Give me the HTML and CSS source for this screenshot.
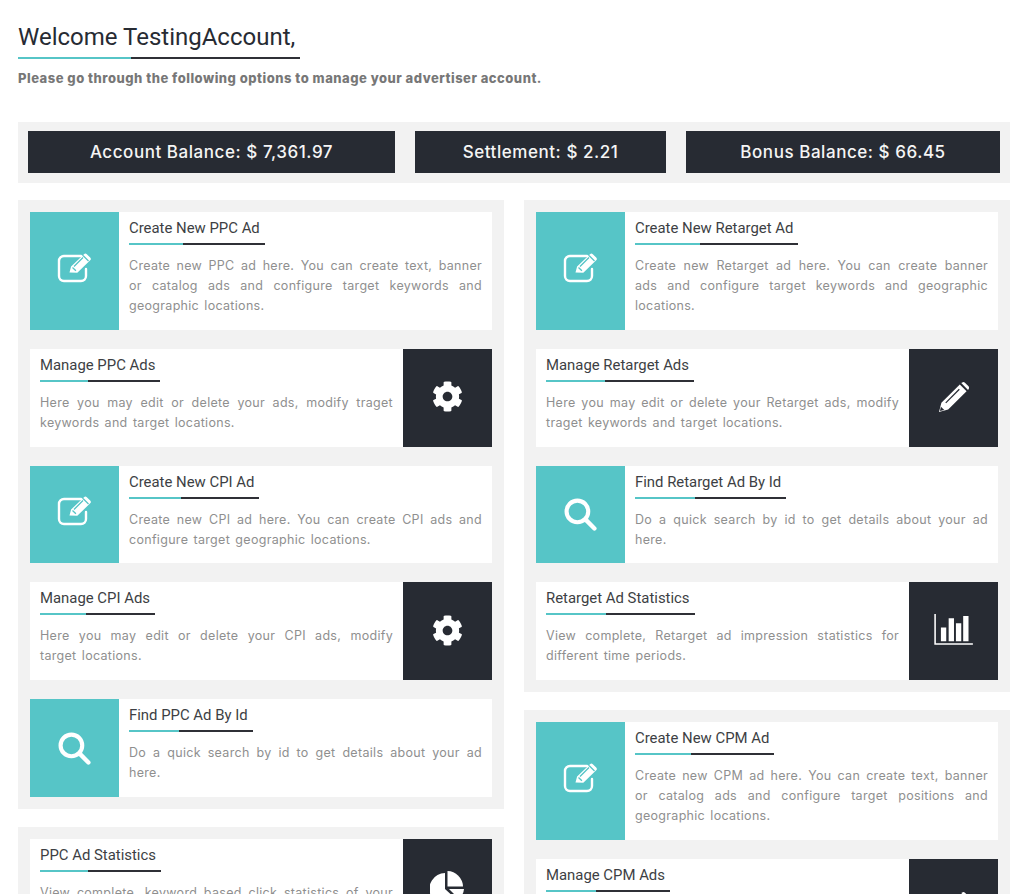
FILE: index.html
```html
<!DOCTYPE html>
<html lang="en">
<head>
  <meta charset="UTF-8" />
  <title>Advertiser Dashboard</title>
  <link rel="stylesheet" href="styles.css">
</head>
<body>
  <svg class="sprite" width="0" height="0">
    <symbol id="i-edit" viewBox="0 0 36 30">
      <path d="M24 3H7a5 5 0 0 0-5 5v15a5 5 0 0 0 5 5h17a5 5 0 0 0 5-5v-7" fill="none" stroke="#fff" stroke-width="2.4" stroke-linecap="round"/>
      <path d="M12.5 19.5l1.6-6L27 1.2a2 2 0 0 1 2.8 0l3.4 3.3a2 2 0 0 1 0 2.8L20.300 19.800z" fill="#fff"/>
      <path d="M15.500 14.500l3.400 3.300M17 13.500l9-9" stroke="#56c5c7" stroke-width="1.300" fill="none"/>
      <path d="M26 2.500l5.500 5.500" stroke="#56c5c7" stroke-width="1.300" fill="none"/>
    </symbol>
    <symbol id="i-gear" viewBox="0 0 512 512">
      <path fill="#fff" d="M487.4 315.7l-42.6-24.6c4.3-23.2 4.3-47 0-70.2l42.6-24.6c4.9-2.800 7.100-8.600 5.500-14-11.100-35.600-30-67.800-54.700-94.600-3.800-4.100-10-5.100-14.800-2.300L380.800 110c-17.900-15.400-38.500-27.300-60.800-35.100V25.800c0-5.600-3.900-10.500-9.400-11.700-36.700-8.200-74.300-7.800-109.200 0-5.500 1.200-9.400 6.100-9.400 11.700V75c-22.200 7.900-42.800 19.800-60.800 35.100L88.700 85.500c-4.900-2.800-11-1.900-14.800 2.300-24.700 26.700-43.600 58.900-54.700 94.600-1.700 5.400.6 11.200 5.500 14L67.300 221c-4.300 23.200-4.300 47 0 70.200l-42.600 24.600c-4.900 2.800-7.100 8.600-5.500 14 11.100 35.600 30 67.800 54.700 94.600 3.800 4.100 10 5.100 14.800 2.300l42.600-24.600c17.900 15.400 38.500 27.300 60.800 35.100v49.200c0 5.600 3.900 10.500 9.400 11.700 36.700 8.200 74.300 7.800 109.200 0 5.500-1.200 9.400-6.100 9.400-11.700v-49.200c22.200-7.900 42.800-19.800 60.800-35.100l42.600 24.600c4.900 2.800 11 1.900 14.800-2.300 24.700-26.700 43.600-58.900 54.700-94.600 1.500-5.500-.7-11.300-5.600-14.100zM256 336c-44.100 0-80-35.900-80-80s35.900-80 80-80 80 35.900 80 80-35.900 80-80 80z"/>
    </symbol>
    <symbol id="i-pencil" viewBox="0 0 32 32">
      <path fill="#fff" d="M1 31l2.500-9.500L22.500 2.500 29.500 9.500 10.500 28.500zM24 1l1-.6a2.500 2.500 0 0 1 2.500 0l4 4a2.500 2.500 0 0 1 0 3L31 8.200z"/>
      <path d="M8 21.500L22 7.500" stroke="#272b33" stroke-width="1.300"/>
      <path d="M3 25.500l3.500 3.500L2 30z" fill="#272b33"/>
    </symbol>
    <symbol id="i-search" viewBox="0 0 32 32">
      <circle cx="13" cy="13" r="10.500" fill="none" stroke="#fff" stroke-width="4"/>
      <path d="M21 21l8.500 8.500" stroke="#fff" stroke-width="4.200" stroke-linecap="round"/>
    </symbol>
    <symbol id="i-chart" viewBox="0 0 40 32">
      <path d="M1 0v31h39" fill="none" stroke="#fff" stroke-width="1.600"/>
      <path fill="#fff" d="M7 14h5.500v14H7zM15 4.500h5.500V28H15zM22.500 9.500H28V28h-5.500zM30 2h5.500v26H30z"/>
    </symbol>
    <symbol id="i-pie" viewBox="0 0 36 36">
      <path fill="#fff" d="M15 3A16 16 0 1 0 27 30L15 19z"/>
      <path fill="#fff" d="M17.500 1A16 16 0 0 1 33 16.500H17.500z"/>
      <path fill="#fff" d="M19 19h15a16 16 0 0 1-5 10z"/>
    </symbol>
  </svg>

  <div class="page">
    <h1 class="rule-title page-title">Welcome TestingAccount,</h1>
    <p class="lead">Please go through the following options to manage your advertiser account.</p>

    <div class="stats">
      <div class="stat stat-account">Account Balance: $ 7,361.97</div>
      <div class="stat stat-settlement">Settlement: $ 2.21</div>
      <div class="stat stat-bonus">Bonus Balance: $ 66.45</div>
    </div>

    <div class="columns">
      <div class="column">
        <div class="panel">
          <a class="card">
            <div class="card-icon teal"><svg class="ico-edit"><use href="#i-edit"/></svg></div>
            <div class="card-body">
              <h3 class="rule-title">Create New PPC Ad</h3>
              <p>Create new PPC ad here. You can create text, banner or catalog ads and configure target keywords and geographic locations.</p>
            </div>
          </a>
          <a class="card">
            <div class="card-body">
              <h3 class="rule-title">Manage PPC Ads</h3>
              <p>Here you may edit or delete your ads, modify traget keywords and target locations.</p>
            </div>
            <div class="card-icon dark"><svg class="ico-gear"><use href="#i-gear"/></svg></div>
          </a>
          <a class="card">
            <div class="card-icon teal"><svg class="ico-edit"><use href="#i-edit"/></svg></div>
            <div class="card-body">
              <h3 class="rule-title">Create New CPI Ad</h3>
              <p>Create new CPI ad here. You can create CPI ads and configure target geographic locations.</p>
            </div>
          </a>
          <a class="card">
            <div class="card-body">
              <h3 class="rule-title">Manage CPI Ads</h3>
              <p>Here you may edit or delete your CPI ads, modify target locations.</p>
            </div>
            <div class="card-icon dark"><svg class="ico-gear"><use href="#i-gear"/></svg></div>
          </a>
          <a class="card">
            <div class="card-icon teal"><svg class="ico-search"><use href="#i-search"/></svg></div>
            <div class="card-body">
              <h3 class="rule-title">Find PPC Ad By Id</h3>
              <p>Do a quick search by id to get details about your ad here.</p>
            </div>
          </a>
        </div>
        <div class="panel">
          <a class="card">
            <div class="card-body">
              <h3 class="rule-title">PPC Ad Statistics</h3>
              <p>View complete, keyword based click statistics of your ads for different time periods.</p>
            </div>
            <div class="card-icon dark"><svg class="ico-pie"><use href="#i-pie"/></svg></div>
          </a>
        </div>
      </div>

      <div class="column">
        <div class="panel">
          <a class="card">
            <div class="card-icon teal"><svg class="ico-edit"><use href="#i-edit"/></svg></div>
            <div class="card-body">
              <h3 class="rule-title">Create New Retarget Ad</h3>
              <p>Create new Retarget ad here. You can create banner ads and configure target keywords and geographic locations.</p>
            </div>
          </a>
          <a class="card">
            <div class="card-body">
              <h3 class="rule-title">Manage Retarget Ads</h3>
              <p>Here you may edit or delete your Retarget ads, modify traget keywords and target locations.</p>
            </div>
            <div class="card-icon dark"><svg class="ico-pencil"><use href="#i-pencil"/></svg></div>
          </a>
          <a class="card">
            <div class="card-icon teal"><svg class="ico-search"><use href="#i-search"/></svg></div>
            <div class="card-body">
              <h3 class="rule-title">Find Retarget Ad By Id</h3>
              <p>Do a quick search by id to get details about your ad here.</p>
            </div>
          </a>
          <a class="card">
            <div class="card-body">
              <h3 class="rule-title">Retarget Ad Statistics</h3>
              <p>View complete, Retarget ad impression statistics for different time periods.</p>
            </div>
            <div class="card-icon dark"><svg class="ico-chart"><use href="#i-chart"/></svg></div>
          </a>
        </div>
        <div class="panel">
          <a class="card">
            <div class="card-icon teal"><svg class="ico-edit"><use href="#i-edit"/></svg></div>
            <div class="card-body">
              <h3 class="rule-title">Create New CPM Ad</h3>
              <p>Create new CPM ad here. You can create text, banner or catalog ads and configure target positions and geographic locations.</p>
            </div>
          </a>
          <a class="card">
            <div class="card-body">
              <h3 class="rule-title">Manage CPM Ads</h3>
              <p>Here you may edit or delete your CPM ads, modify target positions.</p>
            </div>
            <div class="card-icon dark"><svg class="ico-pencil"><use href="#i-pencil"/></svg></div>
          </a>
        </div>
      </div>
    </div>
  </div>
</body>
</html>
```

FILE: styles.css
```css
html, body {
  margin: 0;
  height: 894px;
  overflow: hidden;
  background: #fff;
}
body {
  font-family: Inter, "Open Sans", sans-serif;
  color: #8f8f8f;
}
.sprite {
  position: absolute;
}
.page {
  padding: 22px 14px 0 18px;
}

/* heading with the two colour rule under it */
.rule-title {
  display: block;
  width: fit-content;
  margin: 0;
  font-family: Roboto, sans-serif;
  font-weight: 400;
  color: #3d3f44;
  font-size: 14.9px;
  line-height: 20px;
  padding: 0 5px 7px 0;
  background:
    linear-gradient(to right, #56c5c7 40%, #2f3036 40%) left bottom / 100% 2px no-repeat;
}
.page-title {
  width: 282px;
  box-sizing: border-box;
  font-size: 24px;
  line-height: 30px;
  color: #272b33;
  padding: 0 0 7px 0;
}
.lead {
  margin: 10px 0 0;
  font-size: 13px;
  line-height: 18px;
  font-weight: 800;
  letter-spacing: .5px;
  color: #777;
}

.stats {
  display: flex;
  gap: 20px;
  margin-top: 35px;
  padding: 9px 10px 10px;
  background: #f2f2f2;
}
.stat {
  height: 42px;
  line-height: 42px;
  text-align: center;
  color: #f5f5f5;
  background: #272b33;
  font-size: 17px;
  font-weight: 500;
  letter-spacing: .55px;
}
.stat-account { width: 367px; }
.stat-settlement { width: 251px; }
.stat-bonus { width: 314px; }

.columns {
  display: flex;
  gap: 20px;
  margin-top: 17px;
}
.column {
  width: 486px;
  display: flex;
  flex-direction: column;
  gap: 18px;
}
.panel {
  display: flex;
  flex-direction: column;
  gap: 19px;
  padding: 12px;
  background: #f2f2f2;
}
.card {
  display: flex;
  background: #fff;
}
.card-icon {
  flex: none;
  width: 89px;
  display: flex;
  align-items: center;
  justify-content: center;
}
.teal { background: #56c5c7; }
.dark { background: #272b33; }
.card-body {
  flex: 1;
  min-width: 0;
  padding: 6px 10px 13.8px;
}
.card-body p {
  margin: 11px 0 0;
  font-size: 12.5px;
  line-height: 20px;
  letter-spacing: .3px;
  word-spacing: 1.5px;
  text-align: justify;
}

.ico-edit { width: 36px; height: 30px; margin-bottom: 6px; }
.ico-gear { width: 31px; height: 31px; margin-bottom: 2px; }
.ico-pencil { width: 31px; height: 31px; }
.ico-search { width: 33px; height: 33px; }
.ico-chart { width: 41px; height: 31px; margin-bottom: 4px; }
.ico-pie { width: 36px; height: 36px; }
```
